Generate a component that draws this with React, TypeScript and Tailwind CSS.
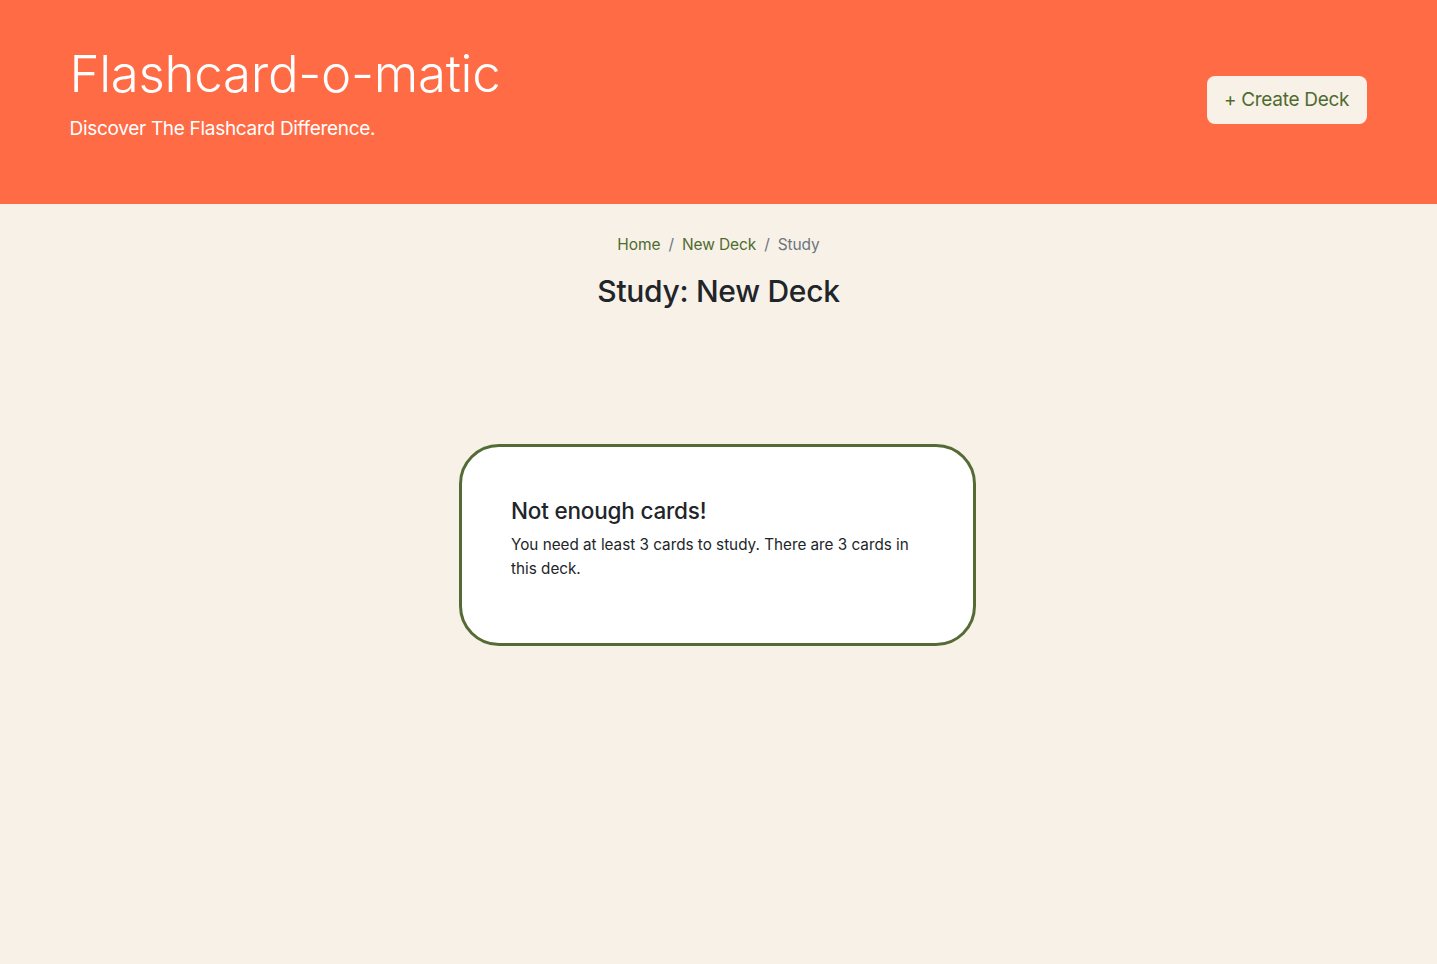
export default function App() {
  return (
    <div className="min-h-[964px] bg-[#f8f1e7] font-['Inter','Noto_Sans',sans-serif] text-[#212529]">
      <header className="bg-[#ff6b45] h-[204px]">
        <div className="mx-auto max-w-[1320px] px-3 h-full flex items-center justify-between">
          <div className="flex flex-col -mt-[18px]">
            <h1 className="text-[51px] font-light leading-[1.2] text-white tracking-[-0.3px] -ml-[1px] -mt-[2px]">Flashcard-o-matic</h1>
            <p className="mt-[14px] text-[19px] text-white leading-[1.2] tracking-[-0.3px] -ml-[1px]">Discover The Flashcard Difference.</p>
          </div>
          <button className="-mt-[4px] bg-[#f8f1e7] text-[#4f6b2f] text-[19px] rounded-[8px] w-[160px] h-[48px] tracking-[-0.3px]">+ Create Deck</button>
        </div>
      </header>
      <main className="flex flex-col items-center">
        <nav className="mt-[28px] flex items-center gap-[8px] text-[15.5px] leading-[26px] tracking-[-0.1px]">
          <span className="text-[#4f6b2f]">Home</span>
          <span className="text-[#6c757d]">/</span>
          <span className="text-[#4f6b2f]">New Deck</span>
          <span className="text-[#6c757d]">/</span>
          <span className="text-[#6c757d]">Study</span>
        </nav>
        <h2 className="mt-[15px] text-[30px] font-medium leading-[1.2] tracking-[-0.3px]">Study: New Deck</h2>
        <div className="mt-[135px] -ml-[2px] w-[517px] h-[202px] bg-white border-[3px] border-[#556b36] rounded-[40px] pl-[49px] pr-[57px] pt-[50px]">
          <h3 className="text-[22.5px] font-medium leading-[1.2] tracking-[-0.2px]">Not enough cards!</h3>
          <p className="mt-[9px] text-[15.25px] leading-[24px]">You need at least 3 cards to study. There are 3 cards in this deck.</p>
        </div>
      </main>
    </div>
  );
}
